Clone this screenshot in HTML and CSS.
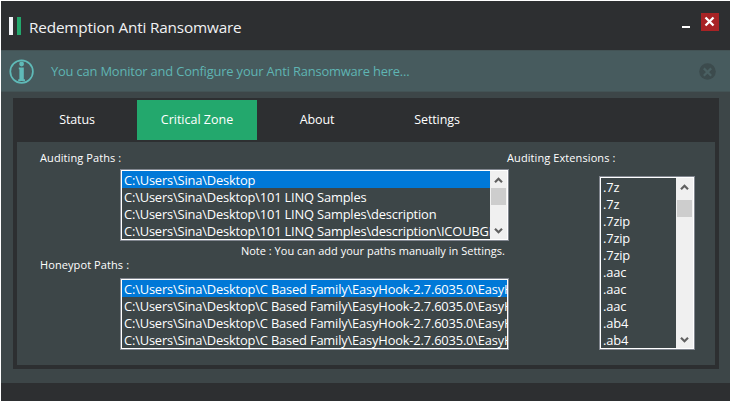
FILE: index.html
```html
<!DOCTYPE html>
<html lang="en">
<head>
<meta charset="utf-8">
<title>Redemption Anti Ransomware</title>
<link rel="stylesheet" href="styles.css">
</head>
<body>
<div class="window">
  <header class="titlebar">
    <span class="bar bar-white"></span><span class="bar bar-green"></span>
    <h1 class="title">Redemption Anti Ransomware</h1>
    <span class="minimize"></span>
    <span class="close"><svg width="18" height="18" viewBox="0 0 18 18"><path d="M4.5 4.5 12.5 12.5M12.5 4.5 4.5 12.5" stroke="#fff" stroke-width="2.3"/></svg></span>
  </header>
  <div class="info">
    <svg class="info-icon" width="26" height="26" viewBox="0 0 26 26"><circle cx="12.6" cy="12.6" r="11.3" fill="none" stroke="#5fbab8" stroke-width="1.7"/><circle cx="12.6" cy="5" r="2.4" fill="#5fbab8"/><path d="M9.8 8.6h5v11.7h1.2v1.7H9.2v-1.7h1.2v-10h-.6z" fill="#5fbab8"/></svg>
    <p class="info-text">You can Monitor and Configure your Anti Ransomware here...</p>
    <svg class="info-close" width="17" height="17" viewBox="0 0 17 17"><circle cx="8.5" cy="8.5" r="8.3" fill="#3c4b4d"/><path d="M4.8 5.4l7.4 7.4M12.2 5.4l-7.4 7.4" stroke="#4a6062" stroke-width="2.2"/></svg>
  </div>
  <main class="body">
    <div class="panel">
      <nav class="tabs">
        <span class="tab">Status</span>
        <span class="tab active">Critical Zone</span>
        <span class="tab">About</span>
        <span class="tab">Settings</span>
      </nav>
      <section class="content">
        <div class="paths">
          <div class="label l1">Auditing Paths :</div>
          <div class="list path-list">
            <div class="rows">
              <div class="row selected"><span>C:\Users\Sina\Desktop</span></div>
              <div class="row"><span>C:\Users\Sina\Desktop\101 LINQ Samples</span></div>
              <div class="row"><span>C:\Users\Sina\Desktop\101 LINQ Samples\description</span></div>
              <div class="row"><span>C:\Users\Sina\Desktop\101 LINQ Samples\description\ICOUBGL</span></div>
            </div>
            <div class="scroll">
              <svg class="arrow" width="17" height="17" viewBox="0 0 17 17"><path d="M5 11.2l3.5-3.5 3.5 3.5" fill="none" stroke="#606060" stroke-width="2.2"/></svg>
              <div class="thumb"></div>
              <svg class="arrow down" width="17" height="17" viewBox="0 0 17 17"><path d="M5 6.7l3.5 3.5 3.5-3.5" fill="none" stroke="#606060" stroke-width="2.2"/></svg>
            </div>
          </div>
          <div class="note">Note : You can add your paths manually in Settings.</div>
          <div class="label l2">Honeypot Paths :</div>
          <div class="list path-list">
            <div class="rows">
              <div class="row selected"><span>C:\Users\Sina\Desktop\C Based Family\EasyHook-2.7.6035.0\EasyH</span></div>
              <div class="row"><span>C:\Users\Sina\Desktop\C Based Family\EasyHook-2.7.6035.0\EasyH</span></div>
              <div class="row"><span>C:\Users\Sina\Desktop\C Based Family\EasyHook-2.7.6035.0\EasyH</span></div>
              <div class="row"><span>C:\Users\Sina\Desktop\C Based Family\EasyHook-2.7.6035.0\EasyH</span></div>
            </div>
          </div>
        </div>
        <div class="extensions">
          <div class="label l3">Auditing Extensions :</div>
          <div class="list ext-list">
            <div class="rows">
              <div class="row"><span>.7z</span></div>
              <div class="row"><span>.7z</span></div>
              <div class="row"><span>.7zip</span></div>
              <div class="row"><span>.7zip</span></div>
              <div class="row"><span>.7zip</span></div>
              <div class="row"><span>.aac</span></div>
              <div class="row"><span>.aac</span></div>
              <div class="row"><span>.aac</span></div>
              <div class="row"><span>.ab4</span></div>
              <div class="row"><span>.ab4</span></div>
            </div>
            <div class="scroll">
              <svg class="arrow" width="17" height="17" viewBox="0 0 17 17"><path d="M5 11.2l3.5-3.5 3.5 3.5" fill="none" stroke="#606060" stroke-width="2.2"/></svg>
              <div class="thumb offset"></div>
              <svg class="arrow down" width="17" height="17" viewBox="0 0 17 17"><path d="M5 6.7l3.5 3.5 3.5-3.5" fill="none" stroke="#606060" stroke-width="2.2"/></svg>
            </div>
          </div>
        </div>
      </section>
    </div>
  </main>
  <footer class="footer"></footer>
</div>
</body>
</html>
```
FILE: styles.css
```css
* { box-sizing: border-box; }
body { margin: 0; background: #fff; font-family: "Open Sans", "Noto Sans", sans-serif; color: #fff; overflow: hidden; }
.window { width: 729px; height: 400px; margin: 1px 0 0 1px; display: flex; flex-direction: column; background: #3d4648; white-space: nowrap; }
.titlebar { height: 49px; background: #2d2f31; display: flex; padding-left: 8px; }
.bar { width: 4px; height: 18px; margin-top: 16px; }
.bar-white { background: #f1f2f6; }
.bar-green { background: #23a86d; margin-left: 4px; }
.title { margin: 14px 0 0 8px; font-size: 15.3px; font-weight: 400; line-height: 24px; letter-spacing: -0.17px; color: #f1f2f4; }
.minimize { width: 8px; height: 2px; background: #fff; margin: 25px 11px 0 auto; }
.close { width: 18px; height: 18px; background: #a82325; margin: 12px 11px 0 0; }
.close svg { display: block; }
.info { height: 42px; background: #475b5e; border-top: 1px solid #435355; border-bottom: 1px solid #435355; display: flex; }
.info-icon { margin: 8px 0 0 8px; }
.info-text { margin: 9px 0 0 16px; font-size: 12.9px; line-height: 22px; letter-spacing: -0.17px; color: #5fb5b3; }
.info-close { margin: 12px 14px 0 auto; }
.body { flex: 1; padding: 6px 11px 14px 12px; }
.panel { height: 271px; background: #2d2f31; padding: 0 4px 4px; display: flex; flex-direction: column; }
.tabs { height: 44px; display: flex; padding-top: 2px; font-size: 12.5px; letter-spacing: -0.1px; }
.tab { width: 120px; height: 40px; line-height: 39px; text-align: center; }
.active { background: #23a86d; letter-spacing: 0; }
.content { flex: 1; background: #3d4648; display: flex; }
.paths { width: 492px; }
.label { font-size: 11px; line-height: 16px; margin-left: 23px; letter-spacing: 0.09px; }
.l1 { margin-top: 8px; height: 19px; }
.l2 { height: 21px; }
.path-list { width: 389px; height: 72px; margin-left: 103px; }
.list { border: 1px solid #828790; outline: 1px solid #fff; outline-offset: -2px; padding: 1px; display: flex; overflow: hidden; }
.rows { flex: 1; min-width: 0; overflow: hidden; }
.row { height: 17px; line-height: 19px; font-size: 12.9px; letter-spacing: -0.18px; padding-left: 2px; overflow: hidden; }
.row span { display: inline-block; }
.selected { background: #0078d7; }
.scroll { width: 17px; background: #f0f0f0; display: flex; flex-direction: column; flex: none; }
.arrow { display: block; flex: none; }
.down { margin-top: auto; }
.thumb { width: 15px; height: 17px; margin-left: 1px; background: #cdcdcd; }
.offset { margin-top: 5px; }
.note { height: 14px; margin-top: 2px; padding-right: 4px; text-align: right; font-size: 11px; line-height: 16px; letter-spacing: 0.02px; }
.extensions { flex: 1; }
.l3 { margin: 8px 0 0 -2px; height: 26px; }
.ext-list { width: 96px; height: 174px; margin-left: 90px; }
.footer { height: 18px; background: #2d2f31; }
```
